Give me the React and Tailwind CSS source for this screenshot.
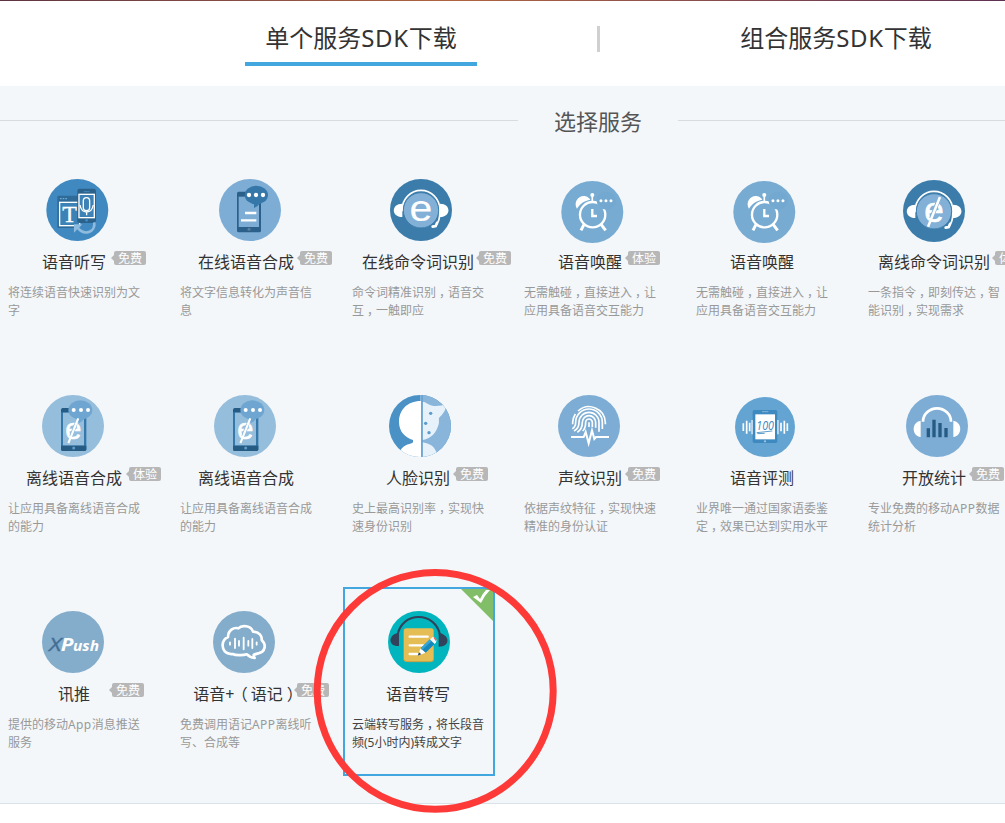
import React from "react";

const INK = "#265b84";

// Every icon is drawn on a grid three times finer than the page; cx/cy is the disc centre on that grid.
function Disc({ dx = 0, dy = 0, cx, cy, r = 93, fill, children }) {
  return (
    <svg className="block h-[66px] w-[148px]" viewBox="0 0 148 66" aria-hidden="true">
      <g transform={`translate(${74 + dx} ${33 + dy}) scale(0.33333) translate(${-cx} ${-cy})`}>
        <circle cx={cx} cy={cy} r={r} fill={fill} />
        {children}
      </g>
    </svg>
  );
}

function Dots({ xs, y, r = 6 }) {
  return xs.map((x) => <circle key={x} cx={x} cy={y} r={r} fill="#fff" />);
}

function SlashedE({ x, y, size, back }) {
  const k = size / 100;
  return (
    <g transform={`translate(${x} ${y}) scale(${k})`}>
      <text x="0" y="33" textAnchor="middle" fontFamily="Liberation Sans, sans-serif" fontSize="112" fill="#fff" stroke="#fff" strokeWidth="2">e</text>
      <path d="M10 -26L-9 22" stroke={back} strokeWidth="13" />
      <path d="M19 -47L-19 48" stroke="#fff" strokeWidth="8" />
    </g>
  );
}

function DictationIcon() {
  return (
    <Disc dx={2.3} cx={232} cy={120} fill="#4089c0">
      <rect x="172" y="77" width="64" height="97" rx="3" fill="#2f6b99" />
      <rect x="179" y="97" width="60" height="70" fill="#3d82b6" stroke="#fff" strokeWidth="4" />
      <path d="M180 86h5M188 86h5M196 86h5" stroke="#6fa8d2" strokeWidth="4" />
      <text x="209" y="156" textAnchor="middle" fontFamily="Liberation Serif, serif" fontSize="72" fill="#fff" stroke="#fff">T</text>
      <rect x="232" y="56" width="56" height="103" rx="7" fill="#2b628b" />
      <rect x="237" y="73" width="46" height="70" fill="#3d82b6" stroke="#fff" strokeWidth="4" />
      <path d="M251 65h18" stroke="#4089c0" strokeWidth="3" />
      <circle cx="260" cy="151" r="4" fill="#4089c0" />
      <rect x="250" y="83" width="19" height="39" rx="9.5" fill="none" stroke="#fff" strokeWidth="4" />
      <path d="M240 105q4 21 20 21t20-21M260 126v10" fill="none" stroke="#fff" strokeWidth="4" />
      <path d="M283 157c4 30-30 42-50 16" fill="none" stroke="#8fbbdf" strokeWidth="8" />
      <path d="M222 188v-25h25z" fill="#8fbbdf" />
    </Disc>
  );
}

function OnlineSpeechIcon() {
  return (
    <Disc dx={3} cx={750} cy={120} fill="#7dadd5">
      <rect x="711" y="65" width="72" height="122" rx="5" fill="#2b608a" />
      <path d="M716 80h61v91h-61z" fill="#7dadd5" />
      <circle cx="747" cy="178" r="4.5" fill="#5e7f9c" />
      <path d="M735 129h34M723 151h46" stroke="#fff" strokeWidth="7" />
      <ellipse cx="769" cy="75" rx="35" ry="28" fill="#3577a9" />
      <path d="M762 97v17q13-5 18-16z" fill="#3577a9" />
      <Dots xs={[747, 768, 789]} y={75} r={6.5} />
    </Disc>
  );
}

function HeadsetMark({ slashed }) {
  return (
    <>
      <circle cx="243" cy="121" r="53" fill="#82b0d6" />
      <path d="M187 124v-7a56 56 0 0 1 112 0v15q0 22-12 34" fill="none" stroke="#fff" strokeWidth="5" />
      <path d="M187 101v40c-34 0-34-40 0-40zM300 101v40c34 0 34-40 0-40z" fill="#fff" />
      <path d="M291 159l-4 9-9 2" fill="none" stroke="#fff" strokeWidth="8" strokeLinecap="round" />
      <circle cx="243" cy="121" r="53" fill="#82b0d6" stroke="#3c7cab" strokeWidth="3" />
      {slashed ? (
        <SlashedE x={243} y={122} size={94} back="#82b0d6" />
      ) : (
        <text x="0" y="154" transform="translate(243 0) scale(1.12 1)" textAnchor="middle" fontFamily="Liberation Sans, sans-serif" fontSize="110" fill="#fff" stroke="#fff" strokeWidth="0.5">e</text>
      )}
    </>
  );
}

function OnlineCommandIcon() {
  return (
    <Disc dx={2} cx={243} cy={120} fill="#3c7cab">
      <HeadsetMark />
    </Disc>
  );
}

function OfflineCommandIcon() {
  return (
    <Disc dx={-1} dy={1} cx={243} cy={120} fill="#3c7cab">
      <HeadsetMark slashed />
    </Disc>
  );
}

function AlarmIcon() {
  return (
    <Disc dx={1.3} dy={2} cx={757} cy={126} fill="#77abd2">
      <circle cx="758" cy="134" r="38" fill="none" stroke="#fff" strokeWidth="7" />
      <path d="M757 117v21h14" fill="none" stroke="#fff" strokeWidth="7" />
      <path d="M732 164l-9 17M784 164l13 17" stroke="#fff" strokeWidth="9" />
      <path d="M757 76v20" stroke="#fff" strokeWidth="5" />
      <circle cx="757" cy="75" r="6" fill="#fff" />
      <path d="M711 116c-12-19 5-42 26-37 7 2 11 6 14 10-18 3-31 12-40 27z" fill="#fff" />
      <ellipse cx="799" cy="92" rx="29" ry="27" fill="#73a8d0" />
      <path d="M774 104l-5 17 20-7z" fill="#77abd2" />
      <Dots xs={[783, 798, 813]} y={92} r={4.5} />
    </Disc>
  );
}

function OfflineSpeechIcon() {
  return (
    <Disc dx={-2} cx={219} cy={123} fill="#95bddc">
      <rect x="183" y="69" width="76" height="129" rx="5" fill="#3577a9" />
      <path d="M188 69h20v13h-25v-8zM183 182h76v11q0 5-5 5h-66q-5 0-5-5z" fill={INK} />
      <path d="M189 83h63v98h-63z" fill="#95bddc" />
      <circle cx="221" cy="189" r="4.5" fill="#5f9ccb" />
      <ellipse cx="241" cy="75" rx="36" ry="29" fill="#6ea6d1" />
      <path d="M228 98l9 16q12-4 17-17z" fill="#6ea6d1" />
      <Dots xs={[221, 243, 264]} y={75} />
      <SlashedE x={220} y={137} size={78} back="#95bddc" />
    </Disc>
  );
}

function FaceIcon() {
  return (
    <Disc dx={1} cx={240} cy={123} fill="#4a91c6">
      <clipPath id="face-disc">
        <circle cx="240" cy="123" r="93" />
      </clipPath>
      <g clipPath="url(#face-disc)">
        <path d="M245 25h100v200H245z" fill="#89b5da" />
        <path d="M243 48c-43 0-66 29-66 62 0 31 19 47 42 55v7c-5 7-26 2-40 28v20h64z" fill="#fff" />
        <path d="M248 50c9 0 16 9 29 12 14 3 30-1 43-5-2 16-8 24-13 31-4 5-9 8-10 12-1 6 1 10-1 18-8 27-21 42-48 47v7c25 5 35 12 43 34v14h-43z" fill="#e7f1f9" />
        <path d="M243 25v195" stroke="#fff" strokeWidth="2" />
        <path d="M246 25v195" stroke="#4a91c6" strokeWidth="3" />
        <circle cx="272" cy="85" r="5" fill="#5b9ccc" />
        <circle cx="257" cy="115" r="5" fill="#5b9ccc" />
        <circle cx="267" cy="143" r="5" fill="#5b9ccc" />
      </g>
    </Disc>
  );
}

function VoiceprintIcon() {
  return (
    <Disc dx={-2} cx={747} cy={123} fill="#7dadd5">
      <g fill="none" stroke="#fff" strokeWidth="5">
        <path d="M714 78a49 49 0 0 1 82 34v6" />
        <path d="M698 118v-6q1-14 8-25" />
        <path d="M697 131q10-5 10-19a40 40 0 0 1 80 0v20" />
        <path d="M702 138q15-7 15-26a30 30 0 0 1 60 0v28" />
        <path d="M712 142q15-9 15-30a20 20 0 0 1 40 0v16" />
        <path d="M728 138q9-8 9-26a10 10 0 0 1 20 0v14" />
        <path d="M747 112v14" />
        <path d="M693 156h38l6-15 9 34 10-39 7 26 5-6h39" strokeWidth="6" />
      </g>
    </Disc>
  );
}

function EvaluationIcon() {
  return (
    <Disc dx={2} dy={1} cx={255} cy={126} r={90} fill="#63a4d2">
      <path d="M190 115v23M200 107v39M209 113v26M217 105v43M293 105v43M303 113v26M313 107v39M322 115v23" stroke="#fff" strokeWidth="5" />
      <rect x="218" y="75" width="74" height="99" rx="5" fill="#3f89c1" />
      <path d="M226 88h59v75h-59z" fill="#fff" />
      <path d="M246 80h19" stroke="#7fb4da" strokeWidth="3" />
      <circle cx="255" cy="169" r="3.5" fill="#9cc5e3" />
      <text x="229" y="135" fontFamily="Open Sans, sans-serif" fontStyle="italic" fontSize="40" textLength="53" lengthAdjust="spacingAndGlyphs" fill="#3f89c1">100</text>
      <path d="M230 143l47-5M232 146l22-1" stroke="#3f89c1" strokeWidth="2.5" />
    </Disc>
  );
}

function StatsIcon() {
  return (
    <Disc dx={2} cx={771} cy={123} fill="#7dadd5">
      <path d="M729 110a42 40 0 0 1 84 0" fill="none" stroke="#fff" strokeWidth="8" />
      <path d="M722 107v49c-28-4-28-45 0-49zM820 107v49c28-4 28-45 0-49z" fill="#fff" />
      <path d="M745 130v27M762 104v53M780 114v43M798 129v28" stroke={INK} strokeWidth="10" />
    </Disc>
  );
}

function PushIcon() {
  return (
    <Disc dx={-2} cx={219} cy={126} fill="#84accb">
      <g fontFamily="Open Sans, sans-serif" fontStyle="italic">
        <text x="147" y="152" fontSize="56" textLength="37" lengthAdjust="spacingAndGlyphs" fill="#426e96" stroke="#426e96">X</text>
        <text x="182" y="152" fontSize="55" fontWeight="bold" textLength="38" lengthAdjust="spacingAndGlyphs" fill="#fff">P</text>
        <text x="219" y="152" fontSize="44" fontWeight="bold" textLength="78" lengthAdjust="spacingAndGlyphs" fill="#fff">ush</text>
      </g>
    </Disc>
  );
}

function CloudIcon() {
  return (
    <Disc dx={-3} cx={732} cy={126} fill="#84accb">
      <path d="M741 163c-13 4-35 3-43-1-22 2-31-13-30-28 1-13 9-20 16-23 0-20 17-30 31-26 10-11 38-9 44 10 18 0 28 13 26 25 15 14 11 36-10 40q-9 2-14 5 0 5 3 9-15-2-23-11z" fill="none" stroke="#fff" strokeWidth="8" strokeLinejoin="round" />
      <path d="M690 127v7M705 116v28M717 123v14M731 113v35M745 123v14M757 117v27M770 127v7" stroke="#fff" strokeWidth="5.5" strokeLinecap="round" />
    </Disc>
  );
}

function TranscribeIcon() {
  return (
    <Disc cx={327} cy={231} fill="#00b5bd">
      <path d="M263 210c5-33 32-54 63-54s58 21 64 54" fill="none" stroke="#31425a" strokeWidth="6" />
      <path d="M267 203v40c-34 2-34-35 0-40zM386 203v42c35 0 36-35 0-42z" fill="#31425a" />
      <rect x="281" y="190" width="90" height="100" rx="8" fill="#e5bd55" />
      <path d="M283 284q3 6 8 6h70q9 0 10-8" fill="none" stroke="#c9a145" strokeWidth="3" />
      <path d="M299 215h54M299 241h40M299 267h24" stroke="#fff" strokeWidth="7" strokeLinecap="round" />
      <path d="M323 272l9-22 15 13z" fill="#fff" />
      <path d="M323 272l4-10 7 6z" fill="#31425a" />
      <path d="M332 250l28-27 14 14-27 26z" fill="#1488bd" />
      <path d="M332 250l28-27 5 5-29 27z" fill="#36a6d5" />
      <path d="M360 223l5-5q4-4 9 1l4 4q3 5 0 9l-4 5z" fill="#f5f7f8" />
      <path d="M371 219l3-2 6 7-3 4z" fill="#ec5f54" />
    </Disc>
  );
}

const SERVICES = [
  { icon: DictationIcon, title: "语音听写", tag: "免费", tagAt: "left-[113px]", text: "将连续语音快速识别为文字" },
  { icon: OnlineSpeechIcon, title: "在线语音合成", tag: "免费", tagAt: "left-[127px]", text: "将文字信息转化为声音信息" },
  { icon: OnlineCommandIcon, title: "在线命令词识别", tag: "免费", tagAt: "left-[134px]", text: "命令词精准识别，语音交互，一触即应" },
  { icon: AlarmIcon, title: "语音唤醒", tag: "体验", tagAt: "left-[111px]", text: "无需触碰，直接进入，让应用具备语音交互能力" },
  { icon: AlarmIcon, title: "语音唤醒", text: "无需触碰，直接进入，让应用具备语音交互能力" },
  { icon: OfflineCommandIcon, title: "离线命令词识别", tag: "体验", tagAt: "left-[134px]", text: "一条指令，即刻传达，智能识别，实现需求" },
  { icon: OfflineSpeechIcon, title: "离线语音合成", tag: "体验", tagAt: "left-[128px]", text: "让应用具备离线语音合成的能力" },
  { icon: OfflineSpeechIcon, title: "离线语音合成", text: "让应用具备离线语音合成的能力" },
  { icon: FaceIcon, title: "人脸识别", tag: "免费", tagAt: "left-[111px]", text: "史上最高识别率，实现快速身份识别" },
  { icon: VoiceprintIcon, title: "声纹识别", tag: "免费", tagAt: "left-[111px]", text: "依据声纹特征，实现快速精准的身份认证" },
  { icon: EvaluationIcon, title: "语音评测", text: "业界唯一通过国家语委鉴定，效果已达到实用水平" },
  { icon: StatsIcon, title: "开放统计", tag: "免费", tagAt: "left-[111px]", text: "专业免费的移动APP数据统计分析" },
  { icon: PushIcon, title: "讯推", tag: "免费", tagAt: "left-[111px]", text: "提供的移动App消息推送服务" },
  { icon: CloudIcon, title: "语音+（语记）", tag: "免费", tagAt: "left-[124px]", text: "免费调用语记APP离线听写、合成等" },
  { icon: TranscribeIcon, title: "语音转写", selected: true, text: "云端转写服务，将长段音频(5小时内)转成文字" },
];

// Full-width commas and brackets are nudged to the middle of their cell; Latin runs are set a little wider.
function Copy({ children }) {
  return children.split(/([，（）]|[A-Za-z+]+)/).map((part, i) => {
    if (part === "，") return <span key={i} className="relative left-[3px]">{part}</span>;
    if (part === "（") return <span key={i} className="relative -left-[3px]">{part}</span>;
    if (part === "）") return <span key={i} className="relative left-[4px]">{part}</span>;
    if (/^[A-Za-z+]+$/.test(part)) return <span key={i} className="tracking-[0.4px]">{part}</span>;
    return part;
  });
}

function Tag({ at, children }) {
  return (
    <span className={`absolute top-[94px] h-[14px] w-8 rounded-[2px] bg-[#b7b7b7] pt-px text-center text-xs leading-[14px] text-white ${at}`}>
      <span className="absolute top-[4px] -left-[3px] border-y-[3px] border-r-[3px] border-y-transparent border-r-[#b7b7b7]" />
      {children}
    </span>
  );
}

function ServiceCard({ icon: Icon, title, tag, tagAt, text, selected }) {
  return (
    <li className={`relative h-[189px] border-2 pt-5 ${selected ? "border-[#42a6df]" : "border-transparent"}`}>
      <Icon />
      <h3 className="-ml-[2px] mt-[7px] text-center text-base leading-6 whitespace-nowrap text-[#333]"><Copy>{title}</Copy></h3>
      {tag && <Tag at={tagAt}>{tag}</Tag>}
      <p className={`mt-[10px] -mr-1 pr-[6px] pl-[7px] text-xs leading-[18px] break-all ${selected ? "text-[#444]" : "text-[#999]"}`}><Copy>{text}</Copy></p>
      {selected && (
        <svg className="absolute top-0 right-0 h-8 w-8" viewBox="0 0 32 32" aria-hidden="true">
          <path d="M0 0h32v32z" fill="#82bd67" />
          <path d="M12 8l4-2 3 4q3-6 6-9h4q-6 6-9 13z" fill="#fff" />
        </svg>
      )}
    </li>
  );
}

export default function App() {
  return (
    <div className="relative h-[823px] w-[1005px] overflow-hidden bg-white font-['Noto_Sans','Noto_Sans_CJK_SC',sans-serif]">
      <div className="h-px bg-linear-to-r from-[#5d3340] via-[#b0653f] via-45% to-[#5e3052]" />
      <nav className="flex h-[85px] items-start pl-[245px] text-2xl text-[#333]">
        <a className="h-[65px] w-[232px] border-b-4 border-[#42a6df] pt-[19px] text-center leading-9">单个服务<span className="tracking-[0.7px]">SDK</span>下载</a>
        <span className="mt-[25px] ml-[120px] h-[26px] w-[3px] bg-[#d0d0d0]" />
        <a className="ml-[120px] w-[232px] pt-[19px] text-center leading-9">组合服务<span className="tracking-[0.7px]">SDK</span>下载</a>
      </nav>
      <main className="h-[718px] border-b border-[#d9e1e9] bg-[#f3f7fa]">
        <div className="flex h-[69px] items-center">
          <span className="h-px w-[518px] bg-[#d9dbdc]" />
          <h2 className="w-40 text-center text-[22px] leading-8 text-[#555]">选择服务</h2>
          <span className="h-px flex-1 bg-[#d9dbdc]" />
        </div>
        <ul className="-ml-px grid w-[1012px] grid-cols-[repeat(6,152px)] gap-x-5 gap-y-[27px]">
          {SERVICES.map((service, i) => (
            <ServiceCard key={i} {...service} />
          ))}
        </ul>
      </main>
      <svg className="absolute top-[568px] left-[313px] h-[246px] w-[245px]" viewBox="0 0 245 246" aria-hidden="true">
        <ellipse cx="122.2" cy="122.9" rx="118" ry="118.4" fill="none" stroke="#fd3a38" strokeWidth="7" />
      </svg>
    </div>
  );
}
